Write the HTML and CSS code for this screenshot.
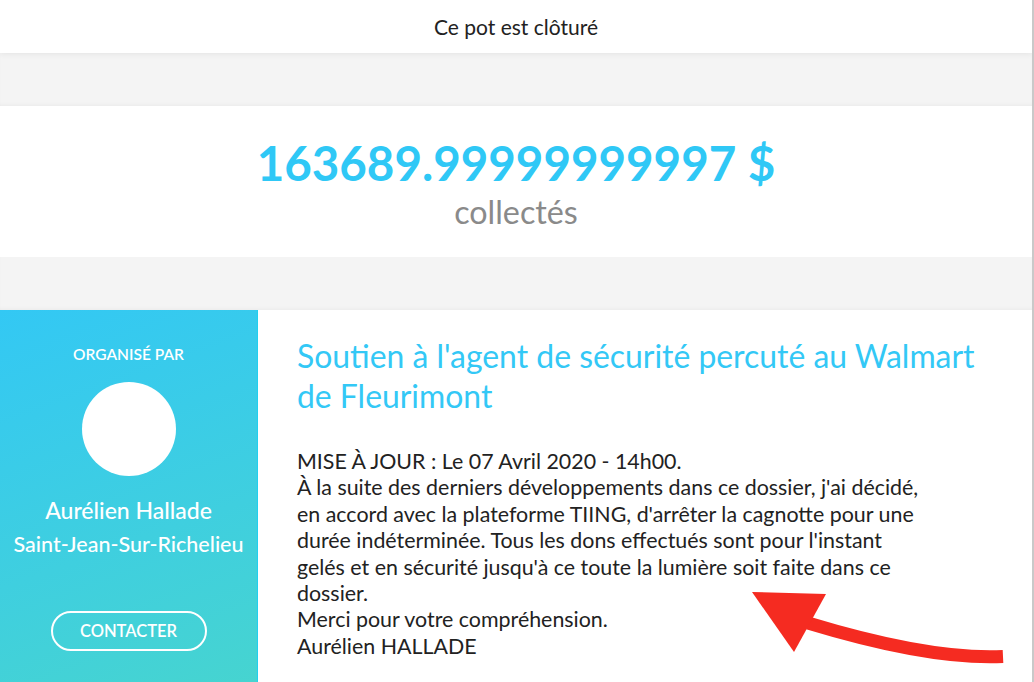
FILE: index.html
```html
<!DOCTYPE html>
<html lang="fr">
<head>
    <meta charset="UTF-8">
    <meta name="viewport" content="width=device-width, initial-scale=1.0">
    <title>Ce pot est clôturé</title>
    <link rel="stylesheet" href="styles.css">
</head>
<body>

<div class="page">
    <header class="status-bar">Ce pot est clôturé</header>

    <div class="spacer"></div>

    <section class="total">
        <div class="amount">163689.99999999997 $</div>
        <div class="collected">collectés</div>
    </section>

    <div class="spacer"></div>

    <section class="pot">
        <aside class="organizer">
            <div class="organizer-label">Organisé par</div>
            <div class="avatar"></div>
            <div class="organizer-name">Aurélien Hallade</div>
            <div class="organizer-city">Saint-Jean-Sur-Richelieu</div>
            <button class="contact-btn">Contacter</button>
        </aside>

        <div class="pot-content">
            <h1 class="pot-title">Soutien à l'agent de sécurité percuté au Walmart de Fleurimont</h1>
            <p class="pot-text">
                MISE À JOUR : Le 07 Avril 2020 - 14h00.<br>
                À la suite des derniers développements dans ce dossier, j'ai décidé,<br>
                en accord avec la plateforme TIING, d'arrêter la cagnotte pour une<br>
                durée indéterminée. Tous les dons effectués sont pour l'instant<br>
                gelés et en sécurité jusqu'à ce toute la lumière soit faite dans ce<br>
                dossier.<br>
                Merci pour votre compréhension.<br>
                Aurélien HALLADE
            </p>

            <!-- flèche d'annotation -->
            <svg class="arrow" width="280" height="100" viewBox="740 580 280 100">
                <path d="M1003 656.5 Q930 660 808 623" fill="none" stroke="#f52b21" stroke-width="13"/>
                <polygon points="752,592 826,594 794,652" fill="#f52b21"/>
            </svg>
        </div>
    </section>
</div>

</body>
</html>
```

FILE: styles.css
```css
* {
    box-sizing: border-box;
}

body {
    margin: 0;
    font-family: 'Lato', 'Open Sans', sans-serif;
    background: #fff;
    overflow: hidden;
}

.page {
    width: 1034px;
    height: 682px;
    border-right: 2px solid #c9c9c9;
    position: relative;
    overflow: hidden;
}

.status-bar {
    height: 53px;
    display: flex;
    align-items: center;
    justify-content: center;
    font-size: 21px;
    color: #222;
    background: #fff;
    position: relative;
    z-index: 1;
    box-shadow: 0 1px 6px rgba(0, 0, 0, 0.07);
}

.spacer {
    height: 53px;
    background: #f4f4f4;
    box-shadow: inset 0 -3px 5px -3px rgba(0, 0, 0, 0.06);
}

.total {
    height: 151px;
    background: #fff;
    text-align: center;
    padding-top: 29px;
}

.amount {
    font-size: 47.5px;
    font-weight: 700;
    color: #2fc8f6;
    line-height: 56px;
}

.collected {
    font-size: 32.3px;
    color: #8a8a8a;
    line-height: 42px;
}

.pot {
    display: flex;
    height: 373px;
}

.organizer {
    width: 258px;
    flex-shrink: 0;
    background: linear-gradient(160deg, #33c8f4 0%, #3fcfdf 60%, #46d4d0 100%);
    border-right: 1px solid #20d0f0;
    color: #fff;
    display: flex;
    flex-direction: column;
    align-items: center;
    padding-top: 35px;
}

.organizer-label {
    font-size: 15.5px;
    font-weight: 600;
    text-transform: uppercase;
    line-height: 18px;
}

.avatar {
    width: 94px;
    height: 94px;
    border-radius: 50%;
    background: #fff;
    margin-top: 19px;
}

.organizer-name {
    margin-top: 19px;
    font-size: 23px;
    font-weight: 500;
    line-height: 30px;
}

.organizer-city {
    font-size: 21.5px;
    font-weight: 500;
    line-height: 38px;
}

.contact-btn {
    margin-top: 48px;
    width: 156px;
    height: 40px;
    border: 2px solid #fff;
    border-radius: 20px;
    background: transparent;
    color: #fff;
    font-family: inherit;
    font-size: 16.5px;
    font-weight: 600;
    text-transform: uppercase;
}

.pot-content {
    flex: 1;
    padding: 27px 40px 0 39px;
}

.pot-title {
    margin: 0;
    font-size: 31.9px;
    font-weight: 400;
    line-height: 39.5px;
    color: #33c8f6;
}

.pot-text {
    margin: 32px 0 0 0;
    font-size: 21.4px;
    line-height: 26.4px;
    color: #222;
}

.arrow {
    position: absolute;
    left: 740px;
    top: 580px;
}
```
